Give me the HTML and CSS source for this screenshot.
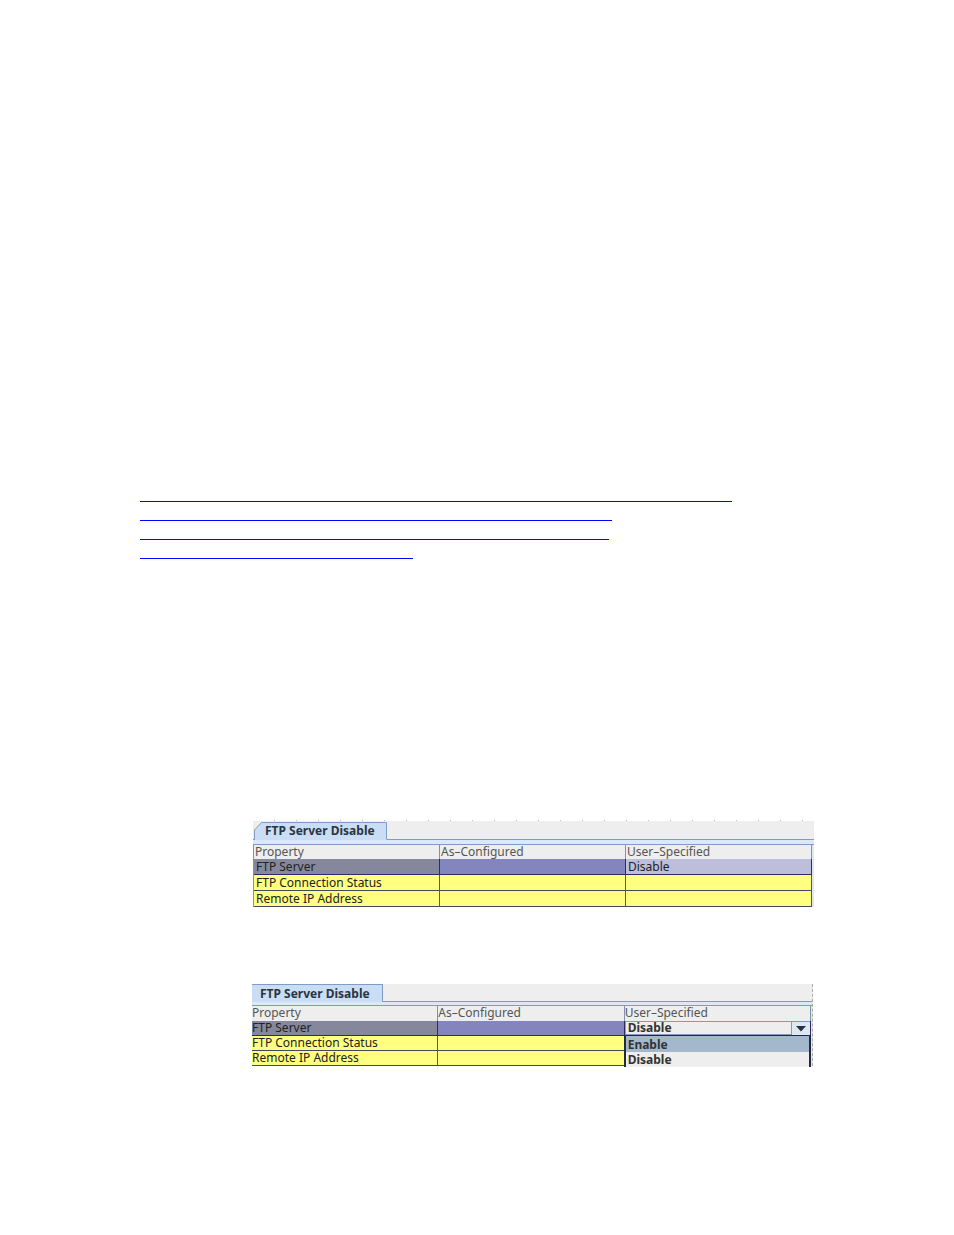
FILE: index.html
```
<!DOCTYPE html>
<html lang="en">
<head>
    <meta charset="utf-8">
    <title>FTP Server Disable</title>
    <link rel="stylesheet" href="styles.css">
</head>
<body>

<main class="page">
    <nav class="links">
        <a class="link-first" href="#configured" aria-label="FTP server properties"></a>
        <a class="link-second" href="#configured" aria-label="FTP connection status"></a>
        <a class="link-third" href="#editing" aria-label="Remote IP address"></a>
        <a class="link-fourth" href="#editing" aria-label="Disable FTP server"></a>
    </nav>

    <section class="panel" id="configured">
        <div class="ticks"></div>
        <div class="tab-bar">
            <svg class="tab-shape" width="135" height="19" viewBox="0 0 135 19">
                <path d="M1.5 19V9L8.5 1.5H133.5V19Z" fill="#c9ddf5"/>
                <path d="M1.5 19V9L8.5 1.5H133.5V18" fill="none" stroke="#7f9dc4"/>
            </svg>
            <button class="tab" type="button">FTP Server Disable</button>
        </div>
        <table class="grid">
            <thead>
                <tr><th>Property</th><th>As–Configured</th><th>User–Specified</th></tr>
            </thead>
            <tbody>
                <tr class="selected"><td>FTP Server</td><td></td><td>Disable</td></tr>
                <tr><td>FTP Connection Status</td><td></td><td></td></tr>
                <tr><td>Remote IP Address</td><td></td><td></td></tr>
            </tbody>
        </table>
    </section>

    <section class="panel panel-editing" id="editing">
        <div class="tab-bar">
            <button class="tab" type="button">FTP Server Disable</button>
        </div>
        <table class="grid">
            <thead>
                <tr><th>Property</th><th>As–Configured</th><th>User–Specified</th></tr>
            </thead>
            <tbody>
                <tr class="selected">
                    <td><label for="ftpServer">FTP Server</label></td>
                    <td></td>
                    <td>
                        <div class="combo">
                            <select id="ftpServer">
                                <option>Enable</option>
                                <option selected>Disable</option>
                            </select>
                            <svg class="arrow" width="19" height="14" viewBox="0 0 19 14">
                                <rect width="19" height="14" fill="#dde8f3"/>
                                <path d="M0.5 0V14M0 0.5H19" stroke="#7f9dc4"/>
                                <path d="M5 5H15L10 10.5Z" fill="#26323f"/>
                            </svg>
                            <!-- Open list under the combo box -->
                            <div class="options">
                                <button class="active" type="button">Enable</button>
                                <button type="button">Disable</button>
                            </div>
                        </div>
                    </td>
                </tr>
                <tr><td>FTP Connection Status</td><td></td><td></td></tr>
                <tr><td>Remote IP Address</td><td></td><td></td></tr>
            </tbody>
        </table>
    </section>
</main>

</body>
</html>
```
FILE: styles.css
```
* {
    box-sizing: border-box;
}
body {
    margin: 0;
    background: #fff;
    font-family: "Noto Sans", "Open Sans", sans-serif;
    font-size: 12px;
    color: #222;
}
.page {
    padding: 483px 140px 168px;
}

/* Underlined links */
.links {
    margin-bottom: 261px;
}
.links a {
    display: block;
    max-width: 100%;
    height: 19px;
    border-bottom: 1px solid #0000ff;
}
.links .link-first {
    width: 592px;
}
.links .link-second {
    width: 472px;
}
.links .link-third {
    width: 469px;
}
.links .link-fourth {
    width: 273px;
}

/* Property panels */
.panel {
    position: relative;
    margin-left: 113px;
    margin-bottom: 77px;
    background: #eee;
}
.ticks {
    height: 1px;
    background: repeating-linear-gradient(to right, #fff 0, #fff 21px, #bbb 21px, #bbb 22px);
}
.tab-bar {
    position: relative;
    height: 24px;
    border-bottom: 1px solid #7f9dc4;
    background: linear-gradient(#eee 18px, #7f9dc4 18px, #7f9dc4 19px, #dce8f6 19px);
}
.tab-shape {
    position: absolute;
    left: 0;
    top: 0;
}
.tab {
    position: relative;
    height: 19px;
    padding: 1px 10px 0 12px;
    border: none;
    background: none;
    font: bold 12px/18px "Noto Sans", sans-serif;
    color: #2b3440;
}
.grid {
    width: 100%;
    table-layout: fixed;
    border-collapse: separate;
    border-spacing: 0;
    border-left: 1px solid #7f93ad;
    border-right: 2px solid #dce8f6;
}
.grid th, .grid td {
    height: 16px;
    padding: 0 2px;
    border-right: 1px solid #4d5878;
    border-bottom: 1px solid #3f4a5c;
    line-height: 15px;
    text-align: left;
    white-space: nowrap;
    background: #ffff80;
}
.grid th {
    height: 14px;
    padding: 0 1px;
    border-right-color: #7f93ad;
    border-bottom: none;
    line-height: 14px;
    font-weight: normal;
    color: #555;
    background: #eee;
}
.grid .selected td {
    border-color: #2c2c66;
    background: #8484be;
}
.grid .selected td:first-child {
    background: #85889c;
}
.grid .selected td:last-child {
    background: #bdbddc;
}
.grid label {
    display: block;
}

/* Panel with the open combo box */
.panel-editing {
    margin-left: 112px;
    margin-right: 1px;
    margin-bottom: 0;
    border-right: 1px dashed #aaa;
}
.panel-editing .tab-bar {
    height: 22px;
    background: linear-gradient(#eee 17px, #7f9dc4 17px, #7f9dc4 18px, #dce8f6 18px);
}
.panel-editing .tab {
    height: 18px;
    padding: 0 12px 0 8px;
    border-top: 1px solid #7f9dc4;
    border-right: 1px solid #7f9dc4;
    background: #c9ddf5;
}
.panel-editing .grid {
    border-left: none;
    border-right-width: 1px;
}
.panel-editing .grid th {
    height: 15px;
    padding: 0;
    vertical-align: top;
}
.panel-editing .grid td {
    height: 15px;
    padding: 0;
    line-height: 14px;
}
.combo {
    position: relative;
    height: 14px;
}
.combo select {
    display: block;
    width: 100%;
    height: 14px;
    padding: 0 20px 0 2px;
    border: 1px solid #7f9dc4;
    border-radius: 0;
    appearance: none;
    background: #eee;
    font: bold 12px/12px "Noto Sans", sans-serif;
    color: #333;
}
.arrow {
    position: absolute;
    right: 0;
    top: 0;
    pointer-events: none;
}
.options {
    position: absolute;
    top: 14px;
    left: -1px;
    right: -1px;
    border: 2px solid #1f2a44;
    border-top-width: 1px;
    border-bottom: none;
    background: #eee;
}
.options button {
    display: block;
    width: 100%;
    height: 15px;
    padding: 0 2px;
    border: none;
    background: #eee;
    font: bold 12px/15px "Noto Sans", sans-serif;
    text-align: left;
    color: #333;
}
.options .active {
    height: 16px;
    background: #a3b8cc;
}
```
